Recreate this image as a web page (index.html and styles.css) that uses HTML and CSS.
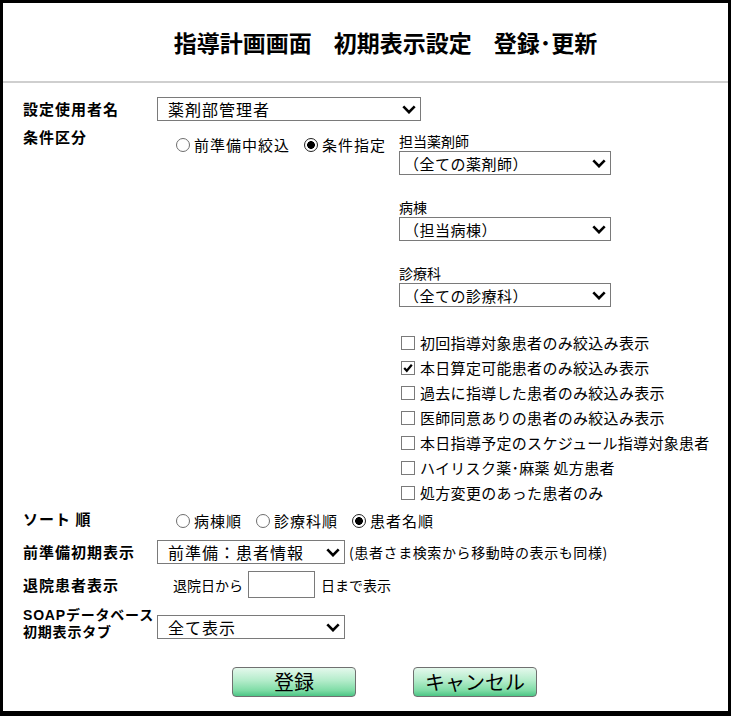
FILE: index.html
```html
<!DOCTYPE html>
<html lang="ja">
<head>
  <meta charset="UTF-8" />
  <title>指導計画画面 初期表示設定</title>
  <link rel="stylesheet" href="styles.css">
</head>
<body>
  <div class="frame">
    <header class="head">
      <h1 class="title"><span>指導計画画面</span><span>初期表示設定</span><span>登録･更新</span></h1>
    </header>

    <form class="form">
      <div class="row row-user">
        <div class="label">設定使用者名</div>
        <div class="select w-user">
          <span>薬剤部管理者</span>
          <svg class="chev" viewBox="0 0 14 9"><path d="M1.3 1.4 L7 7.2 L12.7 1.4" /></svg>
        </div>
      </div>

      <div class="row row-cond">
        <div class="label">条件区分</div>
        <div class="radios cond-radios">
          <label class="radio"><input type="radio" name="mode">前準備中絞込</label>
          <label class="radio"><input type="radio" name="mode" checked>条件指定</label>
        </div>
        <div class="cond-col">
          <div class="field">
            <div class="field-label">担当薬剤師</div>
            <div class="select w-col">
              <span>（全ての薬剤師）</span>
              <svg class="chev" viewBox="0 0 14 9"><path d="M1.3 1.4 L7 7.2 L12.7 1.4" /></svg>
            </div>
          </div>
          <div class="field">
            <div class="field-label">病棟</div>
            <div class="select w-col">
              <span>（担当病棟）</span>
              <svg class="chev" viewBox="0 0 14 9"><path d="M1.3 1.4 L7 7.2 L12.7 1.4" /></svg>
            </div>
          </div>
          <div class="field">
            <div class="field-label">診療科</div>
            <div class="select w-col">
              <span>（全ての診療科）</span>
              <svg class="chev" viewBox="0 0 14 9"><path d="M1.3 1.4 L7 7.2 L12.7 1.4" /></svg>
            </div>
          </div>

          <ul class="checks">
            <li><span class="box"></span>初回指導対象患者のみ絞込み表示</li>
            <li><span class="box"><svg viewBox="0 0 12 12"><path d="M2.2 6 L4.8 8.8 L9.8 2.8" /></svg></span>本日算定可能患者のみ絞込み表示</li>
            <li><span class="box"></span>過去に指導した患者のみ絞込み表示</li>
            <li><span class="box"></span>医師同意ありの患者のみ絞込み表示</li>
            <li><span class="box"></span>本日指導予定のスケジュール指導対象患者</li>
            <li><span class="box"></span>ハイリスク薬･麻薬 処方患者</li>
            <li><span class="box"></span>処方変更のあった患者のみ</li>
          </ul>
        </div>
      </div>

      <div class="row row-sort">
        <div class="label">ソート 順</div>
        <div class="radios sort-radios">
          <label class="radio"><input type="radio" name="sort">病棟順</label>
          <label class="radio"><input type="radio" name="sort">診療科順</label>
          <label class="radio"><input type="radio" name="sort" checked>患者名順</label>
        </div>
      </div>

      <div class="row row-prep">
        <div class="label">前準備初期表示</div>
        <div class="select w-short">
          <span>前準備：患者情報</span>
          <svg class="chev" viewBox="0 0 14 9"><path d="M1.3 1.4 L7 7.2 L12.7 1.4" /></svg>
        </div>
        <span class="note">(患者さま検索から移動時の表示も同様)</span>
      </div>

      <div class="row row-leave">
        <div class="label">退院患者表示</div>
        <div class="leave">
          <span>退院日から</span>
          <input class="days" type="text">
          <span>日まで表示</span>
        </div>
      </div>

      <div class="row row-soap">
        <div class="label soap-label">
          <div>SOAPデータベース</div>
          <div>初期表示タブ</div>
        </div>
        <div class="select w-short">
          <span>全て表示</span>
          <svg class="chev" viewBox="0 0 14 9"><path d="M1.3 1.4 L7 7.2 L12.7 1.4" /></svg>
        </div>
      </div>

      <div class="buttons">
        <button type="button" class="btn">登録</button>
        <button type="button" class="btn">キャンセル</button>
      </div>
    </form>
  </div>
</body>
</html>
```

FILE: styles.css
```css
* {
  box-sizing: border-box;
}

html, body {
  margin: 0;
  padding: 0;
  height: 100%;
  background: #fff;
  color: #000;
  font-family: "Noto Sans CJK JP", "Liberation Sans", sans-serif;
}

.frame {
  height: 716px;
  border: 3px solid #000;
  border-bottom-width: 5px;
  overflow: hidden;
}

.head {
  height: 80px;
  border-bottom: 2px solid #cfcfcf;
  display: flex;
  align-items: center;
  justify-content: center;
  padding-left: 40px;
}

.title {
  margin: 0;
  font-size: 23px;
  font-weight: bold;
  line-height: 1;
  white-space: nowrap;
}

.title span + span {
  margin-left: 22px;
}

.form {
  padding: 14px 20px 0 20px;
}

.row {
  display: flex;
  align-items: center;
}

.label {
  width: 134px;
  flex: none;
  font-size: 15px;
  font-weight: bold;
  letter-spacing: 1px;
  line-height: 18px;
  white-space: nowrap;
}

/* select look-alike */
.select {
  display: flex;
  align-items: center;
  justify-content: space-between;
  height: 24px;
  padding: 0 4px 0 10px;
  border: 1px solid #7a7a7a;
  background: #fff;
  font-size: 16px;
  letter-spacing: 1px;
  white-space: nowrap;
}

.chev {
  width: 14px;
  height: 9px;
  flex: none;
}

.chev path {
  fill: none;
  stroke: #000;
  stroke-width: 2.6;
}

.w-user {
  width: 264px;
}

.w-short {
  width: 188px;
}

.w-col {
  width: 212px;
  padding-left: 4px;
  font-size: 15px;
  letter-spacing: 0.5px;
}

/* radios */
.radios {
  display: flex;
  font-size: 15px;
  letter-spacing: 1px;
  line-height: 18px;
}

.radio {
  display: inline-flex;
  align-items: center;
  gap: 4px;
  margin-right: 14px;
  white-space: nowrap;
}

.radio input {
  -webkit-appearance: none;
  appearance: none;
  width: 14px;
  height: 14px;
  margin: 0;
  border: 1px solid #6e6e6e;
  border-radius: 50%;
  background: #fff;
}

.radio input:checked {
  border-color: #222;
  background: radial-gradient(circle, #000 0 3.6px, #fff 4.1px);
}

.row-user {
  height: 24px;
}

.row-cond {
  margin-top: 7px;
  align-items: flex-start;
}

.cond-radios {
  width: 242px;
  flex: none;
  padding-top: 8px;
  padding-left: 19px;
}

.cond-col {
  padding-top: 4px;
}

.field {
  margin-bottom: 23px;
}

.field-label {
  font-size: 14px;
  line-height: 18px;
  margin-bottom: 1px;
}

.checks {
  list-style: none;
  margin: 0;
  padding: 0;
  font-size: 15px;
  letter-spacing: 0.3px;
}

.checks li {
  display: flex;
  align-items: center;
  height: 25px;
  white-space: nowrap;
}

.box {
  width: 14px;
  height: 14px;
  margin: 0 5px 0 2px;
  border: 1px solid #7a7a7a;
  background: #fff;
  flex: none;
  display: flex;
}

.box svg {
  width: 12px;
  height: 12px;
}

.box path {
  fill: none;
  stroke: #000;
  stroke-width: 2.2;
}

.row-sort {
  margin-top: 5px;
  align-items: flex-start;
}

.sort-radios {
  padding-top: 2px;
  padding-left: 19px;
}

.row-prep {
  margin-top: 10px;
}

.note {
  margin-left: 4px;
  font-size: 14px;
  letter-spacing: 0.6px;
  white-space: nowrap;
}

.row-leave {
  margin-top: 7px;
}

.leave {
  display: flex;
  align-items: center;
  padding-left: 16px;
  font-size: 14px;
}

.days {
  width: 67px;
  height: 27px;
  margin: 0 6px 0 5px;
  border: 1px solid #7a7a7a;
  font: inherit;
}

.row-soap {
  margin-top: 9px;
  align-items: flex-start;
}

.soap-label {
  font-family: "Liberation Sans", "Noto Sans CJK JP", sans-serif;
  font-size: 14px;
  line-height: 17px;
  letter-spacing: 0.8px;
}

.row-soap .select {
  margin-top: 8px;
}

.buttons {
  display: flex;
  justify-content: center;
  gap: 57px;
  margin-top: 26px;
  padding-left: 38px;
}

.btn {
  width: 124px;
  height: 30px;
  padding: 0;
  border: 1px solid #707070;
  border-radius: 4px;
  background: linear-gradient(#e4f8ec, #b3ecca 45%, #7fdca6 80%, #4cc585);
  font-family: inherit;
  font-size: 20px;
  line-height: 1;
  color: #000;
  cursor: pointer;
}
```
